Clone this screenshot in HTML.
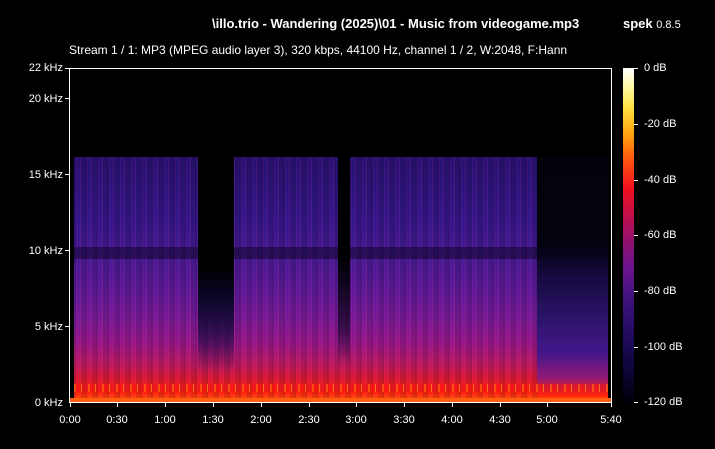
<!DOCTYPE html>
<html><head><meta charset="utf-8"><style>
*{margin:0;padding:0}
body{width:715px;height:449px;background:#000;position:relative;overflow:hidden;font-family:"Liberation Sans",sans-serif;color:#fff}
.a{position:absolute}
.t{font-size:12px;white-space:nowrap}
.yl{position:absolute;right:652px;font-size:11px;white-space:nowrap}
.xl{position:absolute;top:414px;font-size:11px;transform:translateX(-50%)}
.dl{position:absolute;left:644px;font-size:11px;white-space:nowrap}
.tk{position:absolute;background:#fff}
</style></head><body>
<div class="a t" style="left:212px;top:16px;font-weight:bold;font-size:13px">\illo.trio - Wandering (2025)\01 - Music from videogame.mp3</div>
<div class="a t" style="left:623px;top:16px;font-weight:bold;font-size:13px">spek <span style="font-weight:normal;font-size:11px">0.8.5</span></div>
<div class="a t" style="left:69px;top:43px">Stream 1 / 1: MP3 (MPEG audio layer 3), 320 kbps, 44100 Hz, channel 1 / 2, W:2048, F:Hann</div>

<!-- plot -->
<div class="a" style="left:70px;top:68px;width:541px;height:334px;background:#000;overflow:hidden">
  <div class="a" style="left:4px;top:89px;width:534px;height:245px;background:linear-gradient(#281272 0%,#34168a 25%,#4a1a94 42%,#601a9a 55%,#7a1a98 66%,#98188a 76%,#c01a60 85%,#e01a30 91%,#ff2010 96%,#ff6010 100%)"></div>
  <div class="a" style="left:4px;top:89px;width:534px;height:245px;background:repeating-linear-gradient(90deg,rgba(0,0,0,.15) 0 2px,rgba(255,40,120,.08) 2px 3px,rgba(0,0,0,0) 3px 6px,rgba(255,60,100,.12) 6px 7px,rgba(0,0,0,.1) 7px 11px)"></div>
  <!-- after 5:00 region -->
  <div class="a" style="left:467px;top:89px;width:71px;height:245px;background:linear-gradient(#03020a 0%,#05030f 35%,#180a44 50%,#2a1466 65%,#44168a 80%,#901a78 90%,#ff2010 97%,#ff6010 100%)"></div>
  <!-- 10 kHz band -->
  <div class="a" style="left:4px;top:179px;width:534px;height:12px;background:rgba(5,3,25,.45)"></div>
  <!-- gaps -->
  <div class="a" style="left:128px;top:89px;width:36px;height:245px;background:linear-gradient(#000 0%,#000 45%,#0c0628 58%,rgba(20,10,60,.7) 72%,rgba(0,0,0,0) 88%)"></div>
  <div class="a" style="left:268px;top:89px;width:12px;height:245px;background:linear-gradient(#000 0%,#000 40%,rgba(10,5,30,.6) 70%,rgba(0,0,0,0) 85%)"></div>
  <!-- bottom bright lines -->
  <div class="a" style="left:4px;top:316px;width:534px;height:8px;background:repeating-linear-gradient(90deg,rgba(255,90,16,.8) 0 2px,rgba(255,20,16,.6) 2px 7px,rgba(255,150,30,.7) 7px 8px,rgba(230,20,30,.5) 8px 14px)"></div>
  <div class="a" style="left:0;top:330px;width:541px;height:4px;background:#ff6010"></div>
</div>
<!-- frame -->
<div class="tk" style="left:69px;top:68px;width:1px;height:335px"></div>
<div class="tk" style="left:69px;top:68px;width:543px;height:1px"></div>
<div class="tk" style="left:611px;top:68px;width:1px;height:335px"></div>
<div class="tk" style="left:69px;top:402px;width:543px;height:1px"></div>
<!-- y ticks -->
<div class="tk" style="left:65px;top:68px;width:4px;height:1px"></div>
<div class="tk" style="left:65px;top:98px;width:4px;height:1px"></div>
<div class="tk" style="left:65px;top:174px;width:4px;height:1px"></div>
<div class="tk" style="left:65px;top:250px;width:4px;height:1px"></div>
<div class="tk" style="left:65px;top:326px;width:4px;height:1px"></div>
<div class="yl" style="top:62px">22 kHz</div>
<div class="yl" style="top:93px">20 kHz</div>
<div class="yl" style="top:169px">15 kHz</div>
<div class="yl" style="top:245px">10 kHz</div>
<div class="yl" style="top:321px">5 kHz</div>
<div class="yl" style="top:397px">0 kHz</div>
<!-- x ticks -->
<div class="tk" style="left:70px;top:403px;width:1px;height:4px"></div>
<div class="tk" style="left:117px;top:403px;width:1px;height:4px"></div>
<div class="tk" style="left:165px;top:403px;width:1px;height:4px"></div>
<div class="tk" style="left:213px;top:403px;width:1px;height:4px"></div>
<div class="tk" style="left:261px;top:403px;width:1px;height:4px"></div>
<div class="tk" style="left:309px;top:403px;width:1px;height:4px"></div>
<div class="tk" style="left:356px;top:403px;width:1px;height:4px"></div>
<div class="tk" style="left:404px;top:403px;width:1px;height:4px"></div>
<div class="tk" style="left:452px;top:403px;width:1px;height:4px"></div>
<div class="tk" style="left:500px;top:403px;width:1px;height:4px"></div>
<div class="tk" style="left:547px;top:403px;width:1px;height:4px"></div>
<div class="tk" style="left:611px;top:403px;width:1px;height:4px"></div>
<div class="xl" style="left:70px">0:00</div>
<div class="xl" style="left:117px">0:30</div>
<div class="xl" style="left:165px">1:00</div>
<div class="xl" style="left:213px">1:30</div>
<div class="xl" style="left:261px">2:00</div>
<div class="xl" style="left:309px">2:30</div>
<div class="xl" style="left:356px">3:00</div>
<div class="xl" style="left:404px">3:30</div>
<div class="xl" style="left:452px">4:00</div>
<div class="xl" style="left:500px">4:30</div>
<div class="xl" style="left:547px">5:00</div>
<div class="xl" style="left:611px">5:40</div>
<!-- colorbar -->
<div class="a" style="left:623px;top:68px;width:11px;height:335px;background:linear-gradient(#ffffff 0%,#fff8a0 6%,#ffe040 12%,#ffa010 20%,#ff5010 28%,#f01020 36%,#c0104a 44%,#901070 52%,#6a1490 60%,#441280 68%,#2a0e6a 76%,#180850 84%,#0a0430 92%,#000008 100%)"></div>
<div class="tk" style="left:634px;top:68px;width:4px;height:1px"></div>
<div class="tk" style="left:634px;top:124px;width:4px;height:1px"></div>
<div class="tk" style="left:634px;top:180px;width:4px;height:1px"></div>
<div class="tk" style="left:634px;top:235px;width:4px;height:1px"></div>
<div class="tk" style="left:634px;top:291px;width:4px;height:1px"></div>
<div class="tk" style="left:634px;top:347px;width:4px;height:1px"></div>
<div class="tk" style="left:634px;top:402px;width:4px;height:1px"></div>
<div class="dl" style="top:62px">0 dB</div>
<div class="dl" style="top:118px">-20 dB</div>
<div class="dl" style="top:174px">-40 dB</div>
<div class="dl" style="top:229px">-60 dB</div>
<div class="dl" style="top:285px">-80 dB</div>
<div class="dl" style="top:341px">-100 dB</div>
<div class="dl" style="top:396px">-120 dB</div>
</body></html>
